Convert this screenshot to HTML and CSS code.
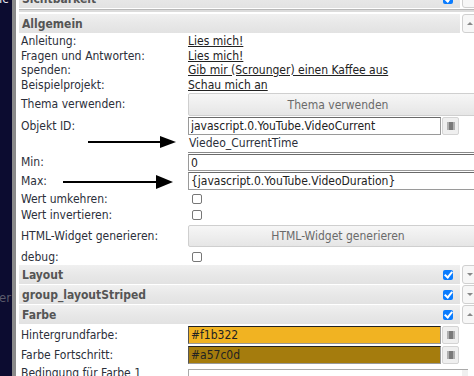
FILE: index.html
```html
<!DOCTYPE html>
<html>
<head>
  <meta charset="UTF-8">
  <link rel="stylesheet" href="styles.css">
</head>
<body>
  <div class="page">
    <!-- Hintergrund links -->
    <div class="bg-strip">
      <span class="bg-text bg-top">ic</span>
      <span class="bg-text bg-mid">er</span>
    </div>
    <div class="divider"></div>

    <div class="panel">
      <!-- Sichtbarkeit (abgeschnitten) -->
      <div class="group group-cut">
        <div class="gh-bar"><span class="gh-title">Sichtbarkeit</span><span class="gh-check"></span></div>
        <div class="gh-btn"></div>
      </div>
      <div class="scroll-line"></div>

      <!-- Allgemein -->
      <div class="group group-first">
        <div class="gh-bar"><span class="gh-title">Allgemein</span></div>
        <div class="gh-btn"><span class="tri up"></span></div>
      </div>

      <div class="row row-link"><div class="lbl">Anleitung:</div><div class="val"><a href="#">Lies mich!</a></div></div>
      <div class="row row-link"><div class="lbl">Fragen und Antworten:</div><div class="val"><a href="#">Lies mich!</a></div></div>
      <div class="row row-link"><div class="lbl">spenden:</div><div class="val"><a href="#">Gib mir (Scrounger) einen Kaffee aus</a></div></div>
      <div class="row row-link"><div class="lbl">Beispielprojekt:</div><div class="val"><a href="#">Schau mich an</a></div></div>

      <div class="row row-btn"><div class="lbl">Thema verwenden:</div><div class="val"><button class="wide-btn">Thema verwenden</button></div></div>

      <div class="row row-input">
        <div class="lbl">Objekt ID:</div>
        <div class="val val-pick"><input class="txt txt-short" value="javascript.0.YouTube.VideoCurrent"><span class="pick-btn"><span class="pick-icon"></span></span></div>
      </div>
      <div class="row row-sub"><div class="lbl"></div><div class="val"><div class="sub-line">Viedeo_CurrentTime</div></div></div>
      <div class="row row-min"><div class="lbl">Min:</div><div class="val"><input class="txt txt-full" value="0"></div></div>
      <div class="row row-max"><div class="lbl">Max:</div><div class="val"><input class="txt txt-full" value="{javascript.0.YouTube.VideoDuration}"></div></div>

      <div class="row row-check row-check-first"><div class="lbl">Wert umkehren:</div><div class="val"><span class="cb"></span></div></div>
      <div class="row row-check"><div class="lbl">Wert invertieren:</div><div class="val"><span class="cb"></span></div></div>
      <div class="row row-btn2"><div class="lbl">HTML-Widget generieren:</div><div class="val"><button class="wide-btn">HTML-Widget generieren</button></div></div>
      <div class="row row-debug"><div class="lbl">debug:</div><div class="val"><span class="cb"></span></div></div>

      <div class="group">
        <div class="gh-bar"><span class="gh-title">Layout</span><span class="gh-check"></span></div>
        <div class="gh-btn"><span class="tri down"></span></div>
      </div>
      <div class="group">
        <div class="gh-bar"><span class="gh-title">group_layoutStriped</span><span class="gh-check"></span></div>
        <div class="gh-btn"><span class="tri down"></span></div>
      </div>
      <div class="group">
        <div class="gh-bar"><span class="gh-title">Farbe</span><span class="gh-check"></span></div>
        <div class="gh-btn"><span class="tri up"></span></div>
      </div>

      <div class="row row-input">
        <div class="lbl">Hintergrundfarbe:</div>
        <div class="val val-pick"><input class="txt txt-short txt-color" style="background-color: #f1b322" value="#f1b322"><span class="pick-btn"><span class="pick-icon"></span></span></div>
      </div>
      <div class="row row-input">
        <div class="lbl">Farbe Fortschritt:</div>
        <div class="val val-pick"><input class="txt txt-short txt-color" style="background-color: #a57c0d" value="#a57c0d"><span class="pick-btn"><span class="pick-icon"></span></span></div>
      </div>
      <div class="row row-last">
        <div class="lbl">Bedingung für Farbe 1</div>
        <div class="val"><div class="area"><span class="area-scroll"></span></div></div>
      </div>
    </div>

    <!-- Pfeile (Anmerkung) -->
    <svg class="arrows" width="474" height="376" viewBox="0 0 474 376">
      <line x1="88" y1="142" x2="163" y2="142" stroke="#000" stroke-width="2.2"/>
      <polygon points="160,136 176,142 160,148" fill="#000"/>
      <line x1="63" y1="182" x2="159" y2="182" stroke="#000" stroke-width="2.2"/>
      <polygon points="156,175 173,182 156,189" fill="#000"/>
    </svg>
  </div>
</body>
</html>
```

FILE: styles.css
```css
html, body {
  margin: 0;
  padding: 0;
  overflow: hidden;
  background: #fff;
}
body {
  width: 474px;
  height: 376px;
  font-family: "DejaVu Sans Condensed", "DejaVu Sans", sans-serif;
  font-size: 12px;
  color: #2b2f3a;
}
.page {
  position: relative;
  display: flex;
  width: 474px;
  height: 376px;
  overflow: hidden;
}
/* Hintergrund links */
.bg-strip {
  width: 12px;
  flex: none;
  background: #0c0c30;
  position: relative;
  overflow: hidden;
}
.bg-text {
  position: absolute;
  left: -1px;
  font-size: 13px;
}
.bg-top {
  top: -9px;
  color: #e8e8f0;
}
.bg-mid {
  top: 290px;
  color: #5a5a6a;
}
.divider {
  width: 4px;
  flex: none;
  background: #8a8a8a;
}
.panel {
  flex: none;
  width: 470px;
  padding-left: 3px;
  background: #fff;
}
/* Gruppenkoepfe */
.group {
  display: flex;
  height: 19px;
  margin-bottom: 1px;
}
.group-cut {
  margin-top: -11px;
  margin-bottom: 0;
}
.group-first {
  margin-top: 2px;
}
.gh-bar {
  width: 441px;
  display: flex;
  align-items: center;
  justify-content: space-between;
  padding: 0 7px 0 3px;
  box-sizing: border-box;
  background: linear-gradient(to bottom, #f0f0f0 0%, #e8e8e8 50%, #e2e2e2 100%);
}
.gh-title {
  font-weight: bold;
  color: #555;
  font-size: 12px;
}
.gh-check {
  width: 10px;
  height: 10px;
  border-radius: 2px;
  background: #0a7cff;
  position: relative;
}
.gh-check::after {
  content: "";
  position: absolute;
  left: 3px;
  top: 0px;
  width: 3px;
  height: 6px;
  border: solid #fff;
  border-width: 0 2px 2px 0;
  transform: rotate(40deg);
}
.gh-btn {
  width: 18px;
  margin-left: 2px;
  box-sizing: border-box;
  border: 1px solid #d0d0d0;
  border-radius: 3px;
  background: #f7f7f7;
  display: flex;
  align-items: center;
  padding-left: 4px;
}
.tri {
  width: 0;
  height: 0;
  border-left: 3px solid transparent;
  border-right: 3px solid transparent;
}
.tri.up {
  border-bottom: 3px solid #888;
}
.tri.down {
  border-top: 3px solid #888;
}
.scroll-line {
  height: 3px;
  margin-top: 1px;
  background: #dcdcdc;
  border-top: 1px solid #b8b8b8;
  box-sizing: border-box;
}
/* Zeilen */
.row {
  display: grid;
  grid-template-columns: 169px 300px;
  align-items: center;
}
.lbl {
  padding-left: 2px;
  white-space: nowrap;
}
.val {
  display: flex;
  align-items: center;
}
.row-link { height: 14.5px; line-height: 15px; }
.row-btn { height: 24px; }
.row-input { height: 20px; }
.row-sub { height: 17px; align-items: stretch; }
.row-min { height: 18px; }
.row-max { height: 19px; }
.row-check { height: 16px; }
.row-check-first { margin-top: 1px; }
.row-btn2 { height: 25px; }
.row-debug { height: 17px; }
.row-last { height: 20px; align-items: start; }
.row-last .lbl { margin-top: 1px; }
.val a {
  color: #222;
  text-decoration: underline;
}
.wide-btn {
  width: 100%;
  height: 23px;
  margin: 0;
  border: 1px solid #cfcfcf;
  border-radius: 2px;
  background: linear-gradient(to bottom, #f6f6f6, #e6e6e6);
  color: #6a6a6a;
  font-family: inherit;
  font-size: 12px;
}
.row-btn .wide-btn { margin-top: 1px; }
.row-btn2 .wide-btn { height: 22px; }
.txt {
  height: 18px;
  box-sizing: border-box;
  margin: 0;
  padding: 0 2px;
  border: 1px solid #9a9a9a;
  border-top-color: #6a6a6a;
  font-family: inherit;
  font-size: 12px;
  color: #222;
  background: #fff;
  outline: none;
}
.txt-short { width: 253px; }
.txt-full { width: 100%; }
.row-min .txt { height: 17px; margin-top: 1px; }
.txt-color {
  border-top-color: #222;
  border-left-color: #555;
}
.pick-btn {
  width: 17px;
  height: 18px;
  margin-left: 1px;
  box-sizing: border-box;
  border: 1px solid #d4d4d4;
  border-radius: 2px;
  background: #efefef;
  display: flex;
  align-items: center;
  justify-content: center;
}
.pick-icon {
  width: 4px;
  height: 8px;
  background: #7a7a7a;
  box-shadow: -2px 0 0 #b0b0b0, 2px 0 0 #b0b0b0;
}
.sub-line {
  width: 100%;
  height: 17px;
  box-sizing: border-box;
  border-bottom: 1px solid #8a8a8a;
  padding-left: 1px;
  line-height: 15px;
}
.cb {
  width: 10px;
  height: 10px;
  margin-left: 4px;
  box-sizing: border-box;
  border: 1px solid #777;
  border-radius: 2px;
  background: #fff;
}
.area {
  width: 280px;
  height: 20px;
  margin-top: 4px;
  box-sizing: border-box;
  border: 1px solid #aaa;
  border-right: none;
  position: relative;
}
.area-scroll {
  position: absolute;
  right: 0;
  top: 0;
  width: 6px;
  height: 100%;
  background: #f0f0f0;
}
/* Anmerkungen */
.arrows {
  position: absolute;
  left: 0;
  top: 0;
  pointer-events: none;
}
```
